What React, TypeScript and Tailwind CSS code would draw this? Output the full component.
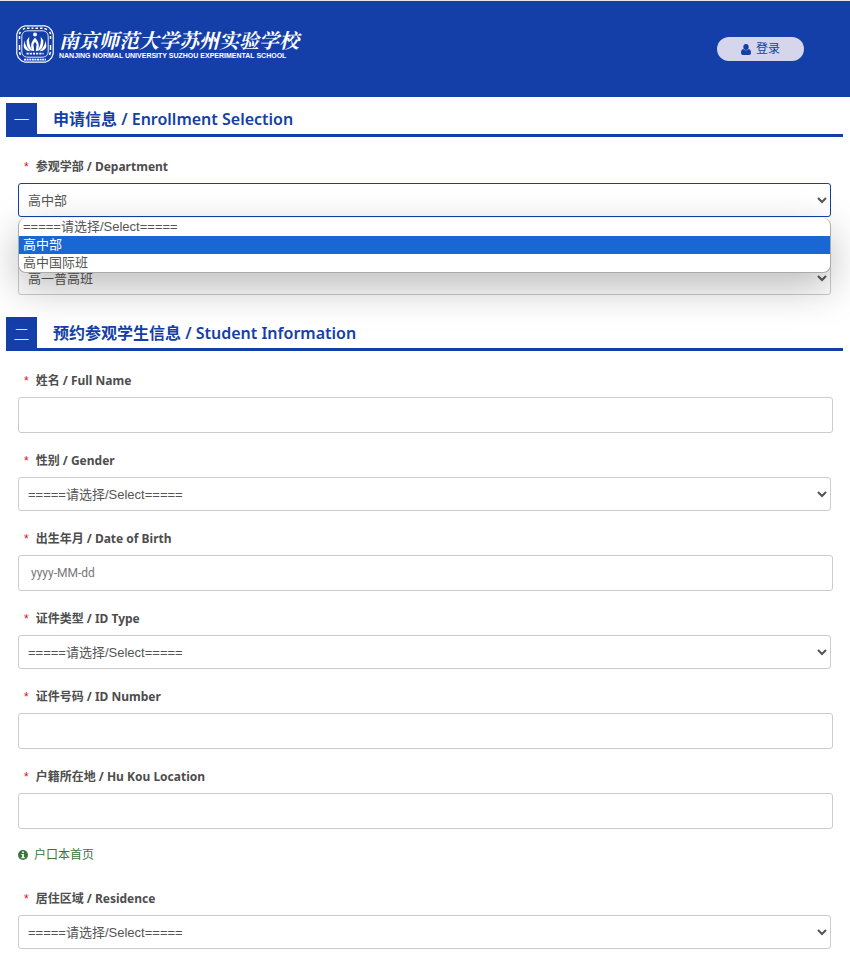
import { FunctionComponent, ReactNode } from "react";

const EMPTY_OPTION = "=====请选择/Select=====";
const DEPARTMENTS = [EMPTY_OPTION, "高中部", "高中国际班"];

interface SectionProps {
  index: string;
  title: string;
  children: ReactNode;
}

interface FieldProps {
  id: string;
  label: string;
  covered?: boolean;
  children: ReactNode;
}

interface SelectProps {
  id: string;
  options?: string[];
  value?: string;
  active?: boolean;
}

const Emblem: FunctionComponent = () => (
  <svg viewBox="0 0 38 38" className="h-[38px] w-[38px] shrink-0" fill="none" stroke="white" aria-hidden="true">
    <path d="M9 .8h20l3.6 1.4 3.2 3.4 1.4 3.8v19.2l-1.4 3.8-3.2 3.4-3.6 1.4H9l-3.6-1.4-3.2-3.4L.8 28.6V9.400l1.400-3.800 3.200-3.400z" strokeWidth="1.2" />
    <path d="M12 5.800h14c4 0 6.200 2.200 6.200 6.200v14c0 4-2.200 6.200-6.200 6.200H12c-4 0-6.200-2.200-6.200-6.200V12c0-4 2.200-6.200 6.200-6.200z" strokeWidth=".9" />
    <path d="M7 4.500l2-1.500M11 3.300h2.500M15.500 3.300h2M19.500 3.300H22M24 3.300h2.500M28.500 3.300l2.500 1.400M3.300 9l1.200-2M33.600 7l1.200 2M3.500 11v3M3.500 20v5M34.500 11v3M34.500 20v5M3.500 27l1 3M34.500 27l-1 3" strokeWidth="1.5" />
    <path d="M8 34.600h22" strokeWidth="1.600" strokeDasharray="2 .6" />
    <path d="M10.500 28.700h17" strokeWidth="1.800" strokeDasharray="2.200 1" />
    <g fill="white" stroke="none">
      <circle cx="19" cy="9.500" r="2" />
      <path d="M16 25.500c-1.600-5-1-8.800 3-12.700 4 3.900 4.600 7.700 3 12.700l-2.200.8.800-7-1.600-2.600-1.600 2.600.8 7z" />
      <path d="M13.300 11.700c-.8 5 .3 9.800 3.300 14.300-4.600-.8-6.200-4.800-5.900-10.500z" />
      <path d="M24.700 11.700c.8 5-.3 9.800-3.300 14.300 4.600-.8 6.200-4.800 5.900-10.500z" />
      <path d="M8.200 15.600c.6 3.800 2.600 7.400 6.200 10.700-4.500 0-6.600-2.500-6.700-5.200z" />
      <path d="M29.800 15.600c-.6 3.800-2.600 7.400-6.200 10.700 4.500 0 6.600-2.500 6.700-5.200z" />
    </g>
  </svg>
);

const UserIcon: FunctionComponent = () => (
  <svg viewBox="0 0 10 11" className="h-[11px] w-[10px]" fill="currentColor" aria-hidden="true">
    <ellipse cx="5" cy="3" rx="2.700" ry="3" />
    <path d="M2.300 4.900C.6 5.200 0 6.900 0 8.700 0 10 .8 11 2 11h6c1.200 0 2-1 2-2.300 0-1.800-.6-3.500-2.300-3.800-.7.900-1.600 1.400-2.700 1.400S3 5.800 2.300 4.900z" />
  </svg>
);

const InfoIcon: FunctionComponent = () => (
  <svg viewBox="0 0 10 10" className="h-[10px] w-[10px]" aria-hidden="true">
    <circle cx="5" cy="5" r="5" fill="currentColor" />
    <path d="M4.200 1.500h1.700v1.400H4.200zM3.400 3.900h2.500v3.200h.8v1.200H3.400V7.100h.8v-2h-.8z" fill="white" />
  </svg>
);

const Header: FunctionComponent = () => (
  <header className="flex items-start justify-between border-t border-[#e5e5e5] bg-[#153fa8] pt-6 pr-[46px] pb-[34px] pl-4">
    <a href="/" className="flex items-center gap-[5px] text-white">
      <Emblem />
      <span>
        <span className="block font-['Noto_Serif_CJK_SC','Noto_Sans_CJK_SC',serif] text-[20px] leading-6 font-bold italic">
          南京师范大学苏州实验学校
        </span>
        <span className="block font-['Liberation_Sans',sans-serif] text-[7px] leading-2 font-bold">
          NANJING NORMAL UNIVERSITY SUZHOU EXPERIMENTAL SCHOOL
        </span>
      </span>
    </a>
    <button type="button" className="mt-3 flex h-6 items-center gap-[5px] rounded-full bg-[#d5d6ec] px-6 text-xs text-[#153fa8]">
      <UserIcon />
      登录
    </button>
  </header>
);

const Section: FunctionComponent<SectionProps> = ({ index, title, children }) => (
  <section>
    <h2 className="mr-[7px] ml-[6px] flex h-[34px] border-b-3 border-[#153fa8] text-base font-semibold text-[#153fa8]">
      <span className="-mb-[3px] flex w-[31px] items-center justify-center bg-[#153fa8] font-light text-white">
        {index}
      </span>
      <span className="pl-4 leading-8">{title}</span>
    </h2>
    <div className="pt-[2px] pr-[17px] pl-[18px]">{children}</div>
  </section>
);

const Field: FunctionComponent<FieldProps> = ({ id, label, covered, children }) => (
  <div>
    <label
      htmlFor={id}
      className={`flex gap-[7px] pt-[18px] pb-[6px] pl-[6px] text-xs leading-5 font-bold text-[#4d4d4d] ${
        covered ? "invisible" : ""
      }`}
    >
      <span className="font-['Liberation_Sans',sans-serif] font-normal text-[#f00]">*</span>
      {label}
    </label>
    {children}
  </div>
);

const Select: FunctionComponent<SelectProps> = ({ id, options = [EMPTY_OPTION], value, active }) => (
  <select
    id={id}
    defaultValue={value}
    className={`block h-[34px] w-[calc(100%-2px)] rounded-[3px] border bg-white px-[5px] font-['Liberation_Sans','Noto_Sans_CJK_SC',sans-serif] text-[13px] text-[#555] outline-none ${
      active ? "border-[#153fa8]" : "border-[#ccc]"
    }`}
  >
    {options.map((option) => (
      <option key={option}>{option}</option>
    ))}
  </select>
);

const Input: FunctionComponent<{ id: string; placeholder?: string }> = ({ id, placeholder }) => (
  <input
    id={id}
    type="text"
    placeholder={placeholder}
    className="block h-9 w-full rounded-[3px] border border-[#ccc] bg-white px-3 font-[Roboto,'Noto_Sans_CJK_SC',sans-serif] text-xs text-[#555] outline-none placeholder:text-[#777]"
  />
);

export default function App() {
  return (
    <div className="min-h-screen bg-white font-['Noto_Sans','Noto_Sans_CJK_SC',sans-serif]">
      <Header />
      <form className="flex flex-col gap-[22px] pt-[6px] pb-[11px]">
        <Section index="一" title="申请信息 / Enrollment Selection">
          <Field id="department" label="参观学部 / Department">
            <div className="relative">
              <Select id="department" options={DEPARTMENTS} value="高中部" active />
              <ul
                role="listbox"
                aria-label="Department"
                className="absolute top-full right-[2px] left-0 z-10 mt-px overflow-hidden rounded-lg border border-t-0 border-[#aaa] bg-white font-['Liberation_Sans','Noto_Sans_CJK_SC',sans-serif] text-[13px] leading-[18px] text-[#555] shadow-[0_14px_40px_rgba(0,0,0,0.27)]"
              >
                {DEPARTMENTS.map((name) => (
                  <li
                    key={name}
                    role="option"
                    aria-selected={name === "高中部"}
                    className={name === "高中部" ? "bg-[#1967d2] px-1 text-white" : "px-1"}
                  >
                    {name}
                  </li>
                ))}
              </ul>
            </div>
          </Field>
          <Field id="grade" label="年级 / Grade" covered>
            <Select id="grade" options={["高一普高班"]} />
          </Field>
        </Section>

        <Section index="二" title="预约参观学生信息 / Student Information">
          <Field id="name" label="姓名 / Full Name">
            <Input id="name" />
          </Field>
          <Field id="gender" label="性别 / Gender">
            <Select id="gender" />
          </Field>
          <Field id="birth" label="出生年月 / Date of Birth">
            <Input id="birth" placeholder="yyyy-MM-dd" />
          </Field>
          <Field id="id-type" label="证件类型 / ID Type">
            <Select id="id-type" />
          </Field>
          <Field id="id-number" label="证件号码 / ID Number">
            <Input id="id-number" />
          </Field>
          <Field id="hukou" label="户籍所在地 / Hu Kou Location">
            <Input id="hukou" />
          </Field>
          <p className="flex items-center gap-[6px] pt-4 pb-[6px] text-xs leading-5 text-[#3c763d]">
            <InfoIcon />
            户口本首页
          </p>
          <Field id="residence" label="居住区域 / Residence">
            <Select id="residence" />
          </Field>
        </Section>
      </form>
    </div>
  );
}
